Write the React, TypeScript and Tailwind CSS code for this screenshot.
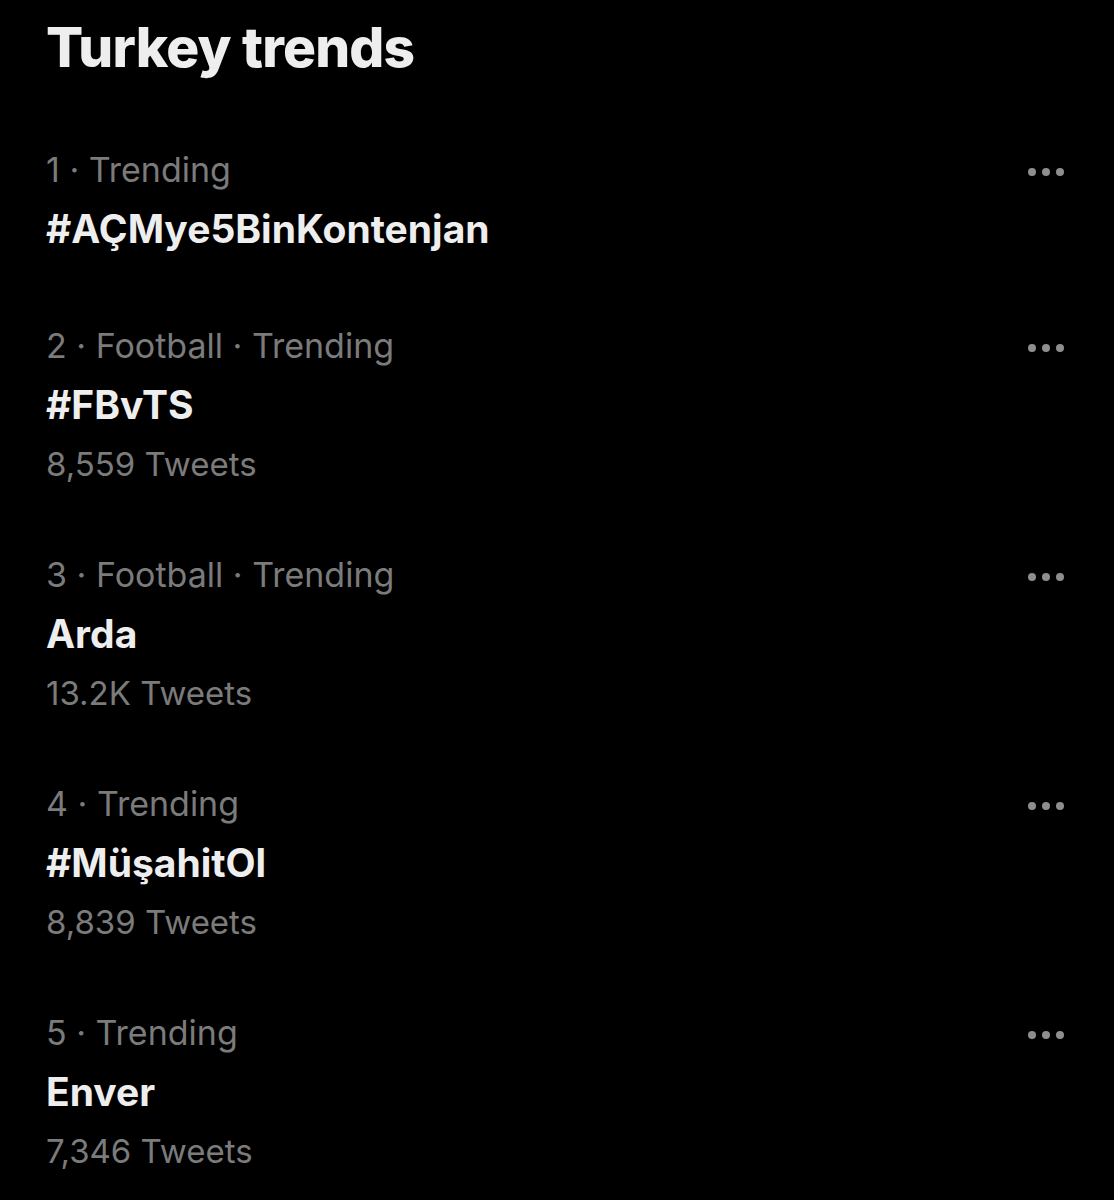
import React from "react";

type Trend = { rank: number; category?: string; name: string; count?: string };

const trends: Trend[] = [
  { rank: 1, name: "#AÇMye5BinKontenjan" },
  { rank: 2, category: "Football", name: "#FBvTS", count: "8,559 Tweets" },
  { rank: 3, category: "Football", name: "Arda", count: "13.2K Tweets" },
  { rank: 4, name: "#MüşahitOl", count: "8,839 Tweets" },
  { rank: 5, name: "Enver", count: "7,346 Tweets" },
];

function Dots() {
  return (
    <div className="flex items-center gap-[6px] pt-[4px]">
      <span className="block h-[8px] w-[8px] rounded-full bg-[#8e8e8e]" />
      <span className="block h-[8px] w-[8px] rounded-full bg-[#8e8e8e]" />
      <span className="block h-[8px] w-[8px] rounded-full bg-[#8e8e8e]" />
    </div>
  );
}

export default function App() {
  return (
    <div
      className="min-h-[1200px] w-[1114px] bg-black text-[#e7e9ea]"
      style={{ fontFamily: "Inter, 'Noto Sans', sans-serif" }}
    >
      <div className="flex h-[112px] items-start px-[46px] pt-[12px]">
        <h1 className="text-[55px] font-extrabold leading-[70px] tracking-[-0.8px] text-[#eeeeee]">
          Turkey trends
        </h1>
      </div>
      <div className="flex flex-col">
        {trends.map((t) => (
          <div key={t.rank} className="flex justify-between pl-[46px] pr-[50px] pt-[29px] pb-[30px]">
            <div className="flex flex-col">
              <div className="h-[58px] text-[34px] leading-[58px] text-[#7b7b7b]">
                {t.rank} · {t.category ? `${t.category} · ` : ""}Trending
              </div>
              <div className="h-[59px] text-[39px] font-bold leading-[59px] text-[#eeeeee]">
                {t.name}
              </div>
              {t.count && (
                <div className="h-[53px] text-[33px] leading-[61px] text-[#7b7b7b]">{t.count}</div>
              )}
            </div>
            <div className="flex h-[58px] items-center">
              <Dots />
            </div>
          </div>
        ))}
      </div>
    </div>
  );
}
